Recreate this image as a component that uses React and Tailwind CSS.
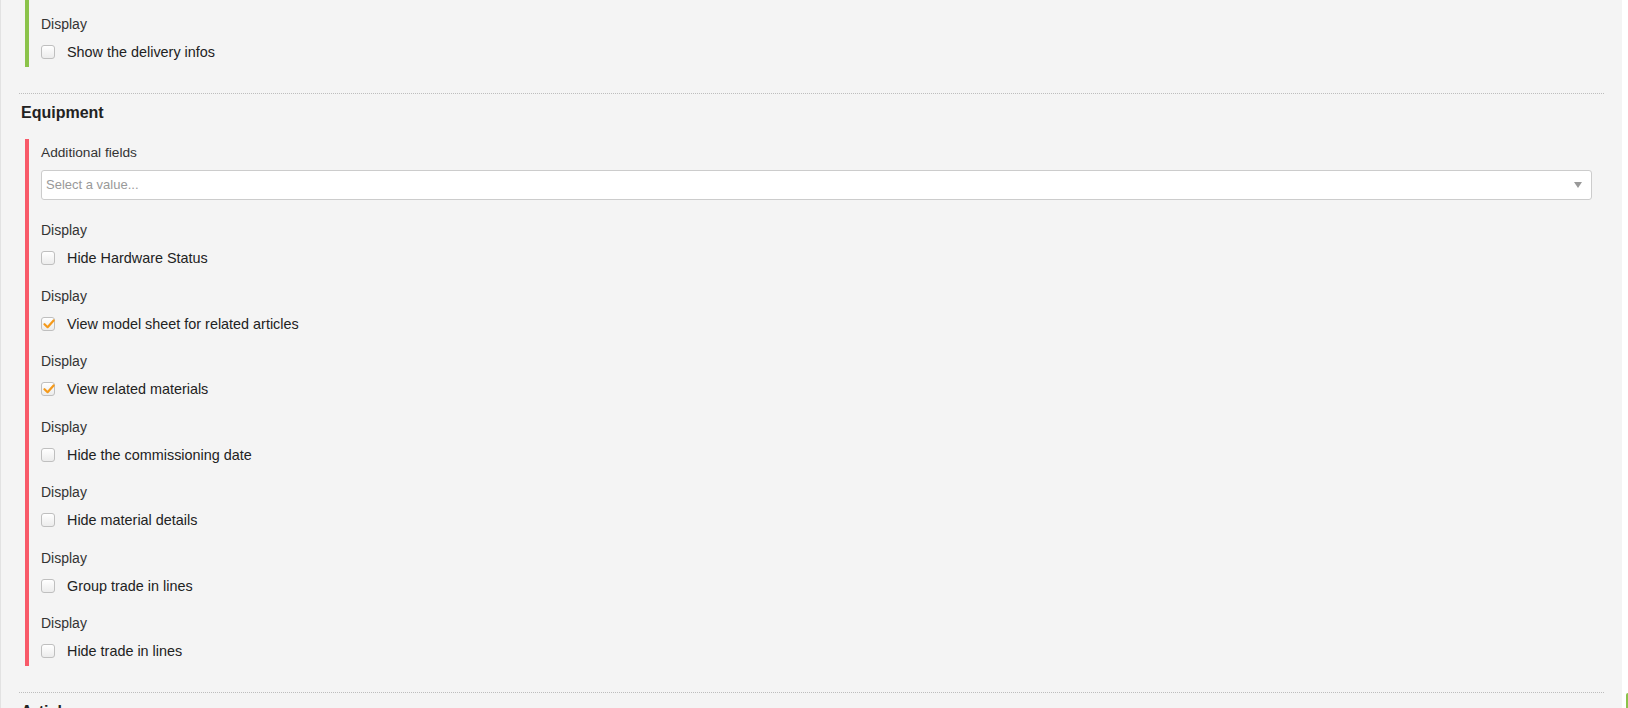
import React from "react";

const font = { fontFamily: '"Liberation Sans", Arial, sans-serif' };

function Box({ checked }) {
  return (
    <span className="relative flex h-[14px] w-[14px] shrink-0 items-center justify-center rounded-[3px] border border-[#bfbfbf] bg-gradient-to-b from-[#ffffff] to-[#ececec]">
      {checked && (
        <svg width="12" height="12" viewBox="0 0 12 12" className="absolute left-[1px] top-[0px]">
          <path d="M1.5 6.2 L4.6 9.2 L10.6 2.4" fill="none" stroke="#f59a1b" strokeWidth="2.2" strokeLinecap="round" strokeLinejoin="round" />
        </svg>
      )}
    </span>
  );
}

function Field({ label, checked }) {
  return (
    <div className="flex flex-col">
      <div className="h-[20px] leading-[20px] text-[14px] text-[#333]">Display</div>
      <div className="mt-[8px] flex h-[20px] items-center gap-[12px]">
        <Box checked={checked} />
        <span className="text-[14.4px] leading-[20px] text-[#222]">{label}</span>
      </div>
    </div>
  );
}

const fields = [
  ["Hide Hardware Status", false],
  ["View model sheet for related articles", true],
  ["View related materials", true],
  ["Hide the commissioning date", false],
  ["Hide material details", false],
  ["Group trade in lines", false],
  ["Hide trade in lines", false],
];

export default function App() {
  return (
    <div className="flex h-[708px] w-full overflow-hidden bg-white" style={font}>
      <div className="flex w-[1622px] shrink-0 flex-col border-l border-[#e2e2e2] bg-[#f4f4f4] pl-[18px] pr-[18px]">
        <div className="ml-[6px] border-l-4 border-[#8bc34a] pb-[5px] pl-[12px] pt-[14px]">
          <Field label="Show the delivery infos" checked={false} />
        </div>

        <div className="mt-[26px] border-t border-dotted border-[#bdbdbd]" />
        <div className="mt-[8px] h-[22px] pl-[2px] text-[16px] font-bold leading-[22px] text-[#222]">Equipment</div>

        <div className="ml-[6px] mt-[15px] border-l-4 border-[#f85a69] pb-[5px] pl-[12px] pr-[12px] pt-[4px]">
          <div className="h-[20px] text-[13.7px] leading-[20px] text-[#333]">Additional fields</div>
          <div className="mt-[7px] flex h-[30px] items-center justify-between rounded-[3px] border border-[#cccccc] bg-white pl-[4px] pr-[9px]">
            <span className="text-[13px] text-[#999]">Select a value...</span>
            <svg width="8" height="6" viewBox="0 0 8 6">
              <polygon points="0,0 8,0 4,6" fill="#999" />
            </svg>
          </div>
          <div className="mt-[20px] flex flex-col gap-[17.5px]">
            {fields.map(([l, c]) => (
              <Field key={l} label={l} checked={c} />
            ))}
          </div>
        </div>

        <div className="mt-[26px] border-t border-dotted border-[#bdbdbd]" />
        <div className="mt-[8px] h-[22px] pl-[2px] text-[16px] font-bold leading-[22px] text-[#222]">Articles</div>
      </div>
      <div className="flex flex-1 flex-col items-end justify-end">
        <div className="h-[15px] w-[2px] rounded-tl-[2px] bg-[#8bc34a]" />
      </div>
    </div>
  );
}
